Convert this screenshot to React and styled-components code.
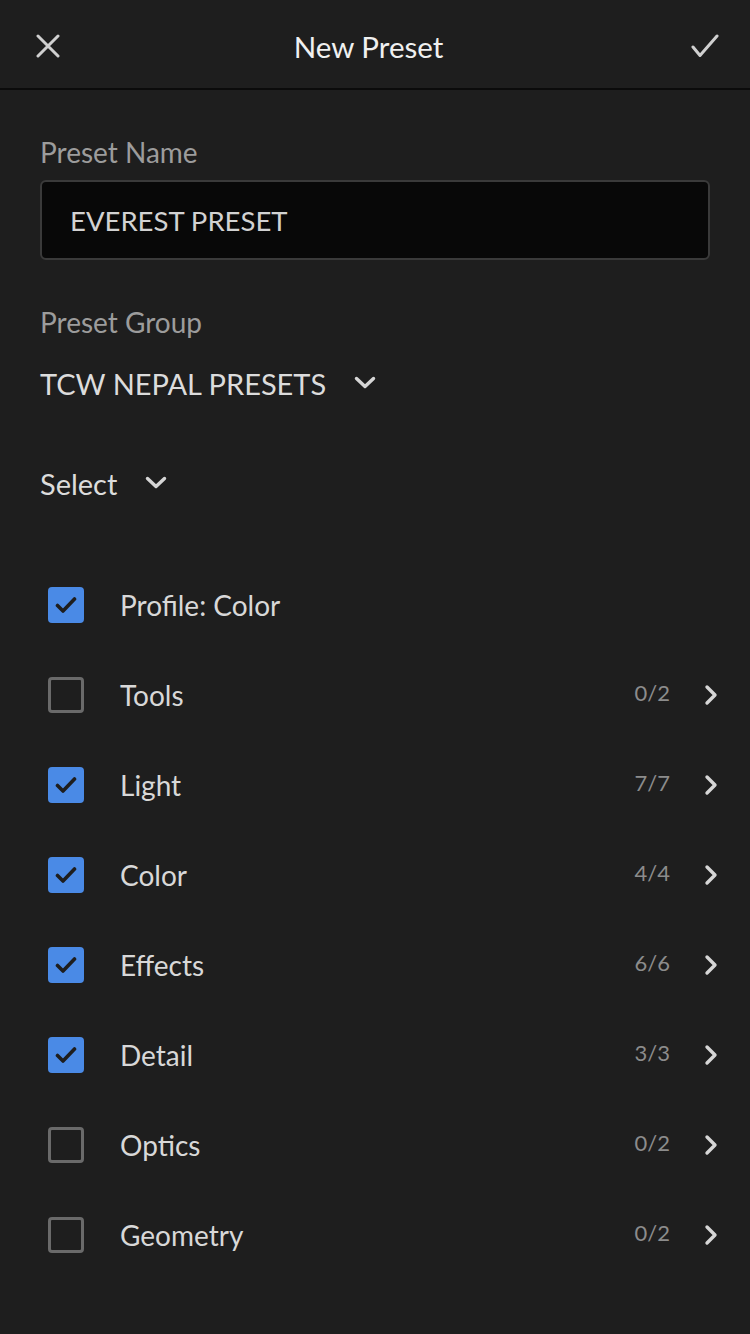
import React, { useState } from 'react'
import styled, { createGlobalStyle } from 'styled-components'

const GlobalStyle = createGlobalStyle`
  html, body {
    margin: 0;
    padding: 0;
    background: #1e1e1e;
  }
  body {
    font-family: Lato, "Open Sans", sans-serif;
  }
`

const groups = [
  { name: 'Profile: Color', checked: true },
  { name: 'Tools', checked: false, count: '0/2' },
  { name: 'Light', checked: true, count: '7/7' },
  { name: 'Color', checked: true, count: '4/4' },
  { name: 'Effects', checked: true, count: '6/6' },
  { name: 'Detail', checked: true, count: '3/3' },
  { name: 'Optics', checked: false, count: '0/2' },
  { name: 'Geometry', checked: false, count: '0/2' },
]

function ChevronDown() {
  return (
    <svg width="22" height="14" viewBox="0 0 22 14">
      <path d="M2.5 2.5 L11 10.5 L19.5 2.5" fill="none" stroke="#d6d6d6" strokeWidth="3.4" strokeLinecap="round" strokeLinejoin="round" />
    </svg>
  )
}

function ChevronRight() {
  return (
    <svg width="14" height="22" viewBox="0 0 14 22">
      <path d="M3 3 L11 11 L3 19" fill="none" stroke="#d6d6d6" strokeWidth="3.4" strokeLinecap="round" strokeLinejoin="round" />
    </svg>
  )
}

function Tick({ color, width }) {
  return (
    <svg width="22" height="18" viewBox="0 0 22 18">
      <path d="M2.5 9.5 L8 15 L19.5 3" fill="none" stroke={color} strokeWidth={width} strokeLinecap="round" strokeLinejoin="round" />
    </svg>
  )
}

function App() {
  const [items, setItems] = useState(groups)

  const toggle = (i) => {
    setItems(items.map((e, n) => (n === i ? { ...e, checked: !e.checked } : e)))
  }

  return (
    <Page>
      <GlobalStyle />
      <Header>
        <IconButton>
          <svg width="24" height="24" viewBox="0 0 24 24">
            <path d="M2 2 L22 22 M22 2 L2 22" fill="none" stroke="#d0d0d0" strokeWidth="3" strokeLinecap="round" />
          </svg>
        </IconButton>
        <Title>New Preset</Title>
        <IconButton>
          <svg width="28" height="24" viewBox="0 0 28 24">
            <path d="M2 13 L9 21.5 L26 2" fill="none" stroke="#d0d0d0" strokeWidth="3" strokeLinecap="round" strokeLinejoin="round" />
          </svg>
        </IconButton>
      </Header>

      <Body>
        <Label>Preset Name</Label>
        <NameInput defaultValue="EVEREST PRESET" />

        <Label $top={46}>Preset Group</Label>
        <Dropdown $top={25}>
          <DropText>TCW NEPAL PRESETS</DropText>
          <ChevronDown />
        </Dropdown>

        <Dropdown $top={60}>
          <DropText>Select</DropText>
          <ChevronDown />
        </Dropdown>

        <List>
          {items.map((e, i) => (
            <Row key={e.name} onClick={() => toggle(i)}>
              <Box $checked={e.checked}>
                {e.checked && <Tick color="#1e1e1e" width={3.6} />}
              </Box>
              <RowLabel>{e.name}</RowLabel>
              {e.count && (
                <>
                  <Count>{e.count}</Count>
                  <ChevronRight />
                </>
              )}
            </Row>
          ))}
        </List>
      </Body>
    </Page>
  )
}

export default App

const Page = styled.div`
  width: 750px;
  min-height: 1334px;
  background: #1e1e1e;
`

const Header = styled.div`
  box-sizing: border-box;
  height: 90px;
  border-bottom: 2px solid #0b0b0b;
  display: flex;
  align-items: center;
  justify-content: space-between;
  padding: 4px 30px 0 33px;
`

const IconButton = styled.div`
  width: 30px;
  height: 30px;
  display: flex;
  align-items: center;
  justify-content: center;
  cursor: pointer;
`

const Title = styled.h1`
  margin: 0 16px 0 0;
  font-size: 29.5px;
  font-weight: 400;
  color: #f0f0f0;
`

const Body = styled.div`
  padding: 46px 40px 0 40px;
`

const Label = styled.div`
  margin-top: ${(p) => p.$top || 0}px;
  font-size: 28px;
  line-height: 32px;
  color: #9c9c9c;
`

const NameInput = styled.input`
  display: block;
  box-sizing: border-box;
  width: 670px;
  height: 80px;
  margin-top: 12px;
  padding: 0 28px;
  background: #080808;
  border: 2px solid #3a3a3a;
  border-radius: 6px;
  outline: none;
  font-family: Lato, "Open Sans", sans-serif;
  font-size: 27.5px;
  color: #d2d2d2;
`

const Dropdown = styled.div`
  margin-top: ${(p) => p.$top || 0}px;
  height: 40px;
  display: flex;
  align-items: center;
  gap: 28px;
  cursor: pointer;
`

const DropText = styled.span`
  font-size: 29px;
  color: #dcdcdc;
`

const List = styled.div`
  margin-top: 57px;
  display: flex;
  flex-direction: column;
`

const Row = styled.div`
  height: 90px;
  display: flex;
  align-items: center;
  padding: 0 32px 0 8px;
  margin-right: -40px;
  cursor: pointer;
`

const Box = styled.div`
  box-sizing: border-box;
  width: 36px;
  height: 36px;
  border-radius: 4px;
  display: flex;
  align-items: center;
  justify-content: center;
  background: ${(p) => (p.$checked ? '#4a8ae6' : 'transparent')};
  border: ${(p) => (p.$checked ? 'none' : '3px solid #6a6a6a')};
`

const RowLabel = styled.span`
  flex: 1;
  margin-left: 36px;
  font-size: 28px;
  color: #d8d8d8;
`

const Count = styled.span`
  margin: 0 34px 5px 0;
  font-size: 22px;
  color: #8c8c8c;
`
